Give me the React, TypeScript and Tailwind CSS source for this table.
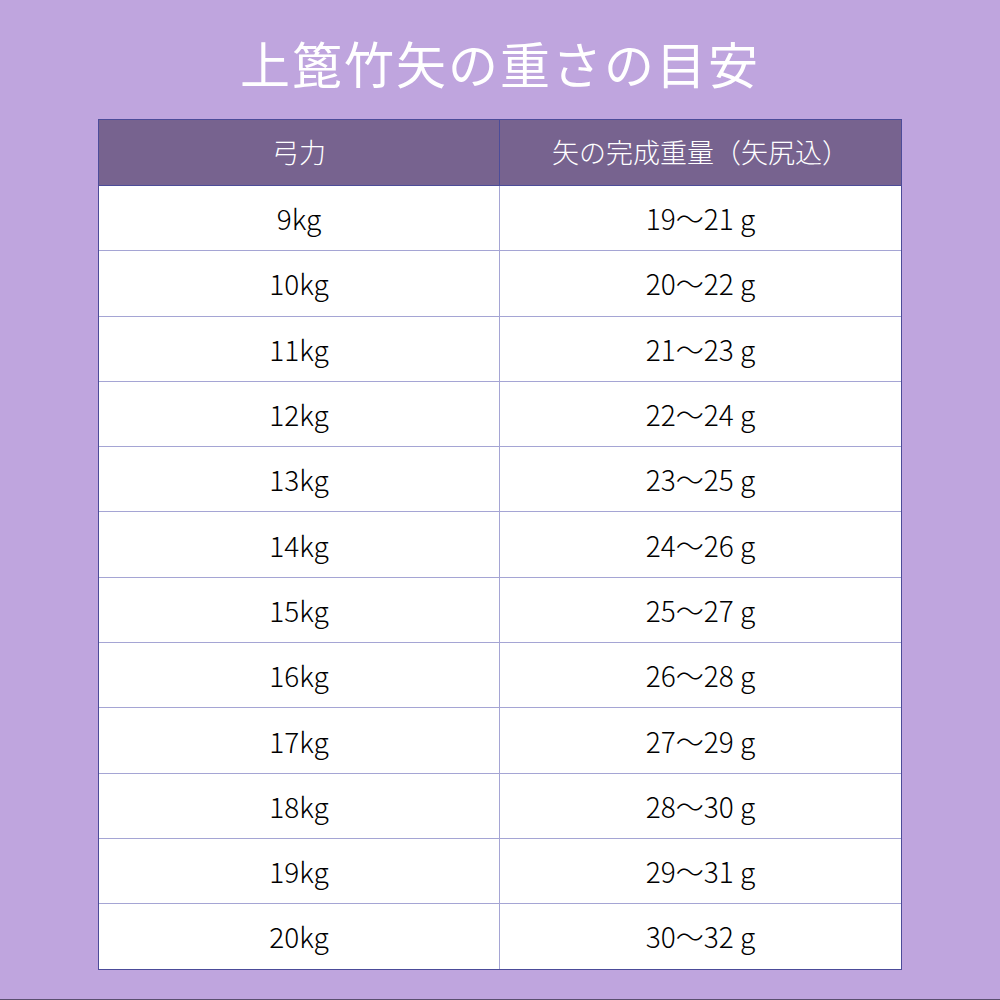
const rows: [string, string][] = [
  ["9kg", "19〜21 g"],
  ["10kg", "20〜22 g"],
  ["11kg", "21〜23 g"],
  ["12kg", "22〜24 g"],
  ["13kg", "23〜25 g"],
  ["14kg", "24〜26 g"],
  ["15kg", "25〜27 g"],
  ["16kg", "26〜28 g"],
  ["17kg", "27〜29 g"],
  ["18kg", "28〜30 g"],
  ["19kg", "29〜31 g"],
  ["20kg", "30〜32 g"],
]

export default function App() {
  return (
    <div
      className="w-[1000px] h-[1000px] bg-[#bfa5de] border-b border-[#5a4f6e] flex flex-col items-center"
      style={{ fontFamily: '"Noto Sans CJK JP", "Noto Sans", sans-serif' }}
    >
      <h1 className="h-[119px] flex items-center justify-center pt-[6px] text-[50px] font-normal tracking-[2px] text-white">
        上篦竹矢の重さの目安
      </h1>

      <div className="w-[804px] border border-[#4c4c99] bg-white">
        <div className="grid grid-cols-2 h-[66px] bg-[#77638f] border-b border-[#4c4c99] text-white text-[27px] font-light">
          <div className="flex items-center justify-center border-r border-[#4c4c99]">弓力</div>
          <div className="flex items-center justify-center">矢の完成重量（矢尻込）</div>
        </div>
        {rows.map(([force, weight], i) => (
          <div
            key={force}
            className={
              i < rows.length - 1
                ? "grid grid-cols-2 h-[65.3px] border-b border-[#a5a5d4] text-[28px] font-light text-black"
                : "grid grid-cols-2 h-[64.3px] text-[28px] font-light text-black"
            }
          >
            <div className="flex items-center justify-center border-r border-[#a5a5d4]">{force}</div>
            <div className="flex items-center justify-center">{weight}</div>
          </div>
        ))}
      </div>
    </div>
  )
}
